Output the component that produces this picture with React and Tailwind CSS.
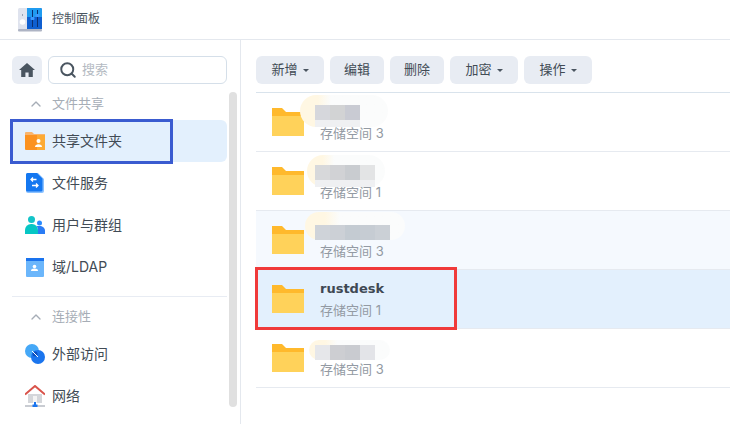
import React from 'react'
import { ChevronUp, Search } from 'lucide-react'

const AppIcon = () => (
  <svg width="24" height="24" viewBox="0 0 24 24">
    <rect x="0" y="0" width="24" height="22" rx="1.5" fill="#dfe3ee" />
    <rect x="0" y="21" width="24" height="2.5" rx="1" fill="#aeb4c4" />
    <path d="M9 0h13.5A1.5 1.5 0 0 1 24 1.5V21H9z" fill="#0f5fd0" />
    <path d="M9 0h13.5A1.5 1.5 0 0 1 24 1.500V9H9z" fill="#1f9bf0" />
    <circle cx="4.500" cy="14" r="2.800" fill="#fff" />
    <rect x="4" y="6" width="1" height="2" fill="#9aa3b5" />
    <rect x="14" y="2" width="1" height="17" fill="#0b2f70" />
    <rect x="19" y="2" width="1" height="17" fill="#0b2f70" />
    <rect x="12.500" y="9" width="4" height="3" rx="1" fill="#3d9bff" />
    <rect x="17.500" y="6" width="4" height="3" rx="1" fill="#3d9bff" />
  </svg>
)

const HomeIcon = () => (
  <svg width="16" height="14" viewBox="0 0 16 14">
    <path d="M8 0 0 7h2.200v7h4.200V9.500h3.200V14h4.200V7H16z" fill="#4a5560" />
  </svg>
)

const SharedFolderIcon = () => (
  <svg width="20" height="18" viewBox="0 0 20 18">
    <path d="M0 1a1 1 0 0 1 1-1h6l2 2h11v2H0z" fill="#f9b56d" />
    <path d="M0 3h20v14a1 1 0 0 1-1 1H1a1 1 0 0 1-1-1z" fill="#fb9220" />
    <path d="M12 3h8v15h-8z" fill="#fdab35" />
    <circle cx="13.500" cy="9" r="2" fill="#fff" />
    <path d="M10 15c0-2 1.500-2.800 3.500-2.800S17 13 17 15z" fill="#fff" />
  </svg>
)

const FileServiceIcon = () => (
  <svg width="18" height="20" viewBox="0 0 18 20">
    <path d="M2 0h10l6 6v12a2 2 0 0 1-2 2H2a2 2 0 0 1-2-2V2a2 2 0 0 1 2-2z" fill="#8cc2ff" />
    <path d="M1.500 0H11l5.500 5.500V17a1.500 1.500 0 0 1-1.500 1.500H1.500A1.500 1.500 0 0 1 0 17V1.500A1.500 1.500 0 0 1 1.500 0z" fill="#1477f0" />
    <path d="M10.500 6.500H5M7 4.500l-2 2 2 2M6 12.500h6M10 10.500l2 2-2 2" stroke="#fff" strokeWidth="1.300" fill="none" />
  </svg>
)

const UsersIcon = () => (
  <svg width="20" height="18" viewBox="0 0 20 18">
    <circle cx="6.500" cy="3.500" r="3.500" fill="#14c4c8" />
    <path d="M0 18v-4a6 6 0 0 1 6-6h1a6 6 0 0 1 6 6v4z" fill="#06c6c4" />
    <circle cx="14.500" cy="7" r="2.500" fill="#2a8bff" />
    <path d="M13 18v-4c0-1.500-.5-3-1.500-3.800.8-.2 1.800-.2 3-.2 3 0 5.500 2 5.500 4.500V18z" fill="#2a7cf5" />
  </svg>
)

const DomainIcon = () => (
  <svg width="18" height="19" viewBox="0 0 18 19">
    <rect x="0" y="0" width="18" height="19" rx="1" fill="#6bb6fb" />
    <rect x="0" y="0" width="18" height="3" fill="#1a73ee" />
    <circle cx="8.500" cy="8.500" r="1.800" fill="#fff" />
    <path d="M5 13c0-1.800 1.500-2.500 3.500-2.500S12 11.200 12 13z" fill="#fff" />
  </svg>
)

const AccessIcon = () => (
  <svg width="20" height="20" viewBox="0 0 20 20">
    <circle cx="7" cy="7" r="7" fill="#45a8f7" />
    <circle cx="13" cy="13" r="7" fill="#1b75ee" />
    <circle cx="10" cy="10" r="2.500" fill="#0b4fc0" />
    <path d="M7 7l6 6" stroke="#fff" strokeWidth="1" />
  </svg>
)

const NetworkIcon = () => (
  <svg width="20" height="22" viewBox="0 0 20 22">
    <path d="M3 9h14v9H3z" fill="#d4d6da" />
    <rect x="8" y="11" width="4" height="7" fill="#f4f4f4" />
    <path d="M0 9.500 10 1l10 8.500" stroke="#d9534a" strokeWidth="2" fill="none" />
    <path d="M10 17v3" stroke="#1b75ee" strokeWidth="2" />
    <rect x="0" y="20" width="20" height="2" fill="#c9ccd2" />
    <rect x="7.500" y="19.500" width="5" height="2.500" fill="#1b75ee" />
  </svg>
)

const FolderIcon = () => (
  <svg width="32" height="28" viewBox="0 0 32 28">
    <path d="M0 0h10l4 4h18v6H0z" fill="#ffb92c" />
    <path d="M0 8h32v20H0z" fill="#ffd25a" />
  </svg>
)

const Caret = () => <span className="ml-[5px] inline-block border-x-[3px] border-t-[3px] border-x-transparent border-t-[#4a5560]" />

const toolbar = [
  { label: '新增', w: 'w-[68px]', caret: true },
  { label: '编辑', w: 'w-[54px]' },
  { label: '删除', w: 'w-[54px]' },
  { label: '加密', w: 'w-[68px]', caret: true },
  { label: '操作', w: 'w-[68px]', caret: true },
]

// 打码的方块,每行一组
const rows = [
  {
    vol: 3,
    halo: 'left-[44px] top-[2px] h-[32px] w-[88px]',
    pos: 'top-[12px]',
    blur: ['bg-[#d6d7dc]', 'bg-[#d2d3d4]', 'bg-[#c9cbd3]'],
    strip: true,
  },
  {
    vol: 1,
    halo: 'left-[51px] top-[3px] h-[32px] w-[78px]',
    pos: 'top-[13px]',
    blur: ['bg-[#d7d8da]', 'bg-[#d1d2d5]', 'bg-[#c9ccd0]', 'bg-[#e3e4e5]'],
    strip: true,
  },
  {
    vol: 3,
    bg: 'bg-[#f5f9fe]',
    halo: 'left-[49px] top-[1px] h-[28px] w-[100px]',
    pos: 'top-[14px]',
    blur: ['bg-[#cfd3d9]', 'bg-[#ccd0d6]', 'bg-[#c4cbd2]', 'bg-[#c6ccd3]', 'bg-[#cbd0d6]'],
  },
  { name: 'rustdesk', vol: 1, bg: 'bg-[#e3f0fd]' },
  {
    vol: 3,
    halo: 'left-[53px] top-[11px] h-[20px] w-[81px]',
    pos: 'top-[16px]',
    blur: ['bg-[#e6e7ea]', 'bg-[#cdced2]', 'bg-[#c9cbd0]', 'bg-[#e3e4e8]'],
  },
]

function NavItem({ icon, label, active }) {
  return (
    <div className={`flex h-[42px] items-center rounded-md pl-[13px] text-[14px] text-[#414b55] ${active ? 'bg-[#e3f0fd]' : ''}`}>
      <span className="flex w-[20px] justify-center">{icon}</span>
      <span className="ml-[7px] pb-[2px]">{label}</span>
    </div>
  )
}

function Section({ label }) {
  return (
    <div className="flex h-[20px] items-center pl-[16px] text-[13px] text-[#a6adb6]">
      <ChevronUp size={16} strokeWidth={2} className="text-[#a6adb6]" />
      <span className="ml-[8px]">{label}</span>
    </div>
  )
}

export default function App() {
  return (
    <div className='relative h-[424px] w-[730px] overflow-hidden bg-white font-["Inter","Noto_Sans_CJK_SC",sans-serif]'>
      <div className="flex h-[40px] items-center border-b border-[#e4e8ee] pl-[18px]">
        <AppIcon />
        <span className="ml-[10px] pb-[2px] text-[12px] text-[#4a5560]">控制面板</span>
      </div>

      <div className="flex h-[384px]">
        <div className="relative w-[241px] shrink-0 border-r border-[#e4e8ee] pl-[12px] pt-[16px]">
          <div className="w-[215px]">
            <div className="flex h-[28px] gap-[6px]">
              <div className="flex w-[30px] items-center justify-center rounded-md bg-[#e9edf4]">
                <HomeIcon />
              </div>
              <div className="flex flex-1 items-center rounded-md border border-[#d5dfe9] pl-[10px] text-[13px] text-[#b4bac2]">
                <Search size={18} strokeWidth={2.6} className="text-[#4a5560]" />
                <span className="ml-[5px]">搜索</span>
              </div>
            </div>
            <div className="mt-[10px]"><Section label="文件共享" /></div>
            <div className="mt-[6px]">
              <NavItem active icon={<SharedFolderIcon />} label="共享文件夹" />
              <NavItem icon={<FileServiceIcon />} label="文件服务" />
              <NavItem icon={<UsersIcon />} label="用户与群组" />
              <NavItem icon={<DomainIcon />} label="域/LDAP" />
            </div>
            <div className="mt-[8px] border-t border-[#e8ecf3]" />
            <div className="mt-[10px]"><Section label="连接性" /></div>
            <div className="mt-[6px]">
              <NavItem icon={<AccessIcon />} label="外部访问" />
              <NavItem icon={<NetworkIcon />} label="网络" />
            </div>
          </div>
          <div className="absolute left-[229px] top-[52px] h-[315px] w-[8px] rounded-full bg-[#e0e0e0]" />
        </div>

        <div className="flex-1 pl-[15px] pt-[16px]">
          <div className="flex h-[28px] gap-[6px]">
            {toolbar.map(b => (
              <div key={b.label} className={`flex ${b.w} items-center justify-center rounded-md bg-[#e8ecf3] text-[13px] text-[#414b55]`}>
                {b.label}
                {b.caret && <Caret />}
              </div>
            ))}
          </div>
          <div className="mt-[8px] border-t border-[#d9e3ec]">
            {rows.map((r, i) => (
              <div key={i} className={`relative flex h-[59px] items-center border-b border-[#e6eaf0] pl-[16px] ${r.bg || ''}`}>
                <FolderIcon />
                <div className="ml-[16px] flex flex-col">
                  <span className="h-[20px] font-['DejaVu_Sans'] text-[13px] leading-[20px] font-bold text-[#3f4854]">{r.name}</span>
                  <span className="mt-[2px] text-[13px] leading-[18px] text-[#939aa3]">存储空间 {r.vol}</span>
                </div>
                {r.blur && (
                  <>
                    <div className={`absolute ${r.halo} rounded-full bg-linear-to-r from-[#fff7e3] from-20% to-[#fbfcfc] to-35%`} />
                    <div className={`absolute left-[59px] ${r.pos}`}>
                      <div className="flex h-[15px]">
                        {r.blur.map(c => <div key={c} className={`w-[15px] ${c}`} />)}
                      </div>
                      {r.strip && <div className="h-[7px] bg-[#eff0f2]" />}
                    </div>
                  </>
                )}
              </div>
            ))}
          </div>
        </div>
      </div>

      {/* 标注框 */}
      <div className="pointer-events-none absolute left-[10px] top-[119px] h-[45px] w-[163px] border-[3px] border-[#3a5bd0]" />
      <div className="pointer-events-none absolute left-[255px] top-[267px] h-[63px] w-[202px] border-[3px] border-[#f03a3a]" />
    </div>
  )
}
